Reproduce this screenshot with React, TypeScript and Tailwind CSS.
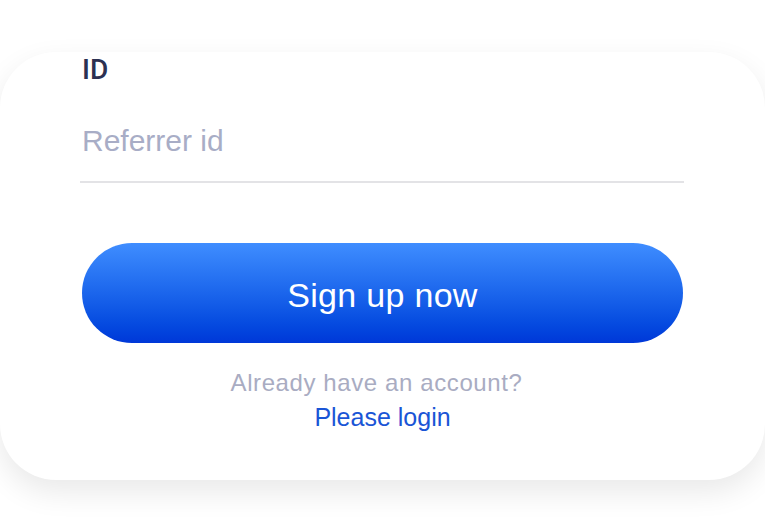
import React from "react";

export default function App() {
  return (
    <div
      className="w-[765px] h-[528px] bg-white overflow-hidden"
      style={{ fontFamily: '"Liberation Sans", Arial, sans-serif' }}
    >
      <div className="mt-[52px] h-[428px] w-[765px] rounded-[56px] bg-white shadow-[0_12px_30px_rgba(0,0,0,0.09)] pl-[82px] pr-[82px] pt-[4px] flex flex-col">
        <div className="text-[28px] leading-none font-medium text-[#2c3152] font-['Roboto',sans-serif]">ID</div>
        <div className="mt-[42px] pb-[25px] border-b-2 border-[#e3e3e6] -ml-[2px] pl-[2px] mr-[-1px]">
          <input
            type="text"
            placeholder="Referrer id"
            className="block w-full h-[30px] text-[30px] leading-none bg-transparent outline-none text-[#2c3152] placeholder:text-[#a8adc6]"
          />
        </div>
        <button
          type="button"
          className="mt-[60px] h-[100px] w-full rounded-full bg-gradient-to-b from-[#3f8dff] to-[#0037d8] text-white text-[34px] leading-none tracking-[0.3px] pt-[3px]"
        >
          Sign up now
        </button>
        <div className="mt-[28px] pr-[12px] text-center text-[24px] leading-none tracking-[0.6px] text-[#a9acc2]">
          Already have an account?
        </div>
        <div className="mt-[10px] text-center text-[25px] leading-none text-[#1a55d6]">
          Please login
        </div>
      </div>
    </div>
  );
}
